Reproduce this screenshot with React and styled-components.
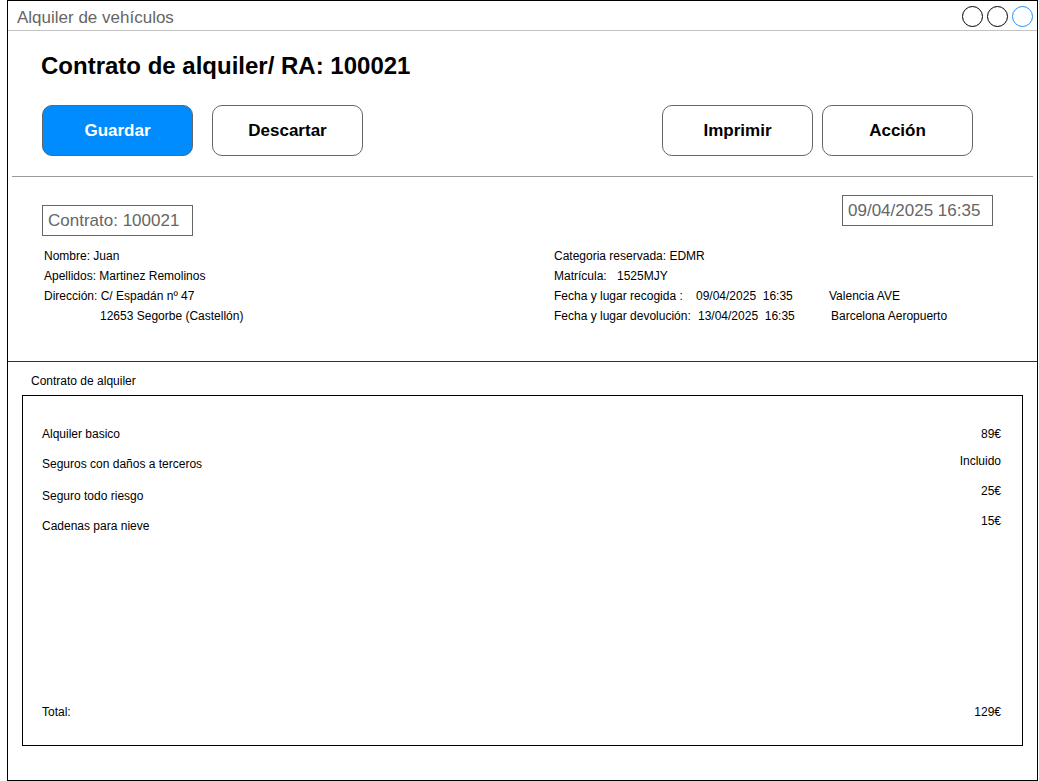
import React from 'react';
import styled, { createGlobalStyle } from 'styled-components';

const GlobalStyle = createGlobalStyle`
  html, body {
    margin: 0;
    padding: 0;
    background: #ffffff;
  }
  body {
    font-family: "Liberation Sans", Arial, sans-serif;
    color: #000;
  }
`;

const Window = styled.div`
  box-sizing: border-box;
  margin-left: 7px;
  width: 1031px;
  height: 781px;
  border: 1px solid #000;
  display: flex;
  flex-direction: column;
`;

const TitleBar = styled.div`
  box-sizing: border-box;
  height: 30px;
  border-bottom: 1px solid #c4c4c4;
  display: flex;
  align-items: center;
  justify-content: space-between;
  padding: 0 4px 0 9px;
`;

const TitleText = styled.span`
  font-size: 17px;
  color: #666;
  margin-top: 4px;
`;

const Controls = styled.div`
  display: flex;
  gap: 4px;
  margin-top: 2px;
`;

const Dot = styled.span`
  box-sizing: border-box;
  width: 21px;
  height: 21px;
  border-radius: 50%;
  border: 1.5px solid ${(props) => (props.$blue ? '#1e90ff' : '#000')};
`;

const Header = styled.div`
  padding: 19px 4px 0;
`;

const Heading = styled.h1`
  margin: 0 0 23px 29px;
  font-size: 24px;
  line-height: 32px;
  font-weight: bold;
`;

const Toolbar = styled.div`
  display: flex;
  padding: 0 60px 0 30px;
  padding-bottom: 20px;
  border-bottom: 1px solid #9a9a9a;
`;

const Group = styled.div`
  display: flex;
  gap: ${(props) => props.$gap}px;
  margin-left: ${(props) => (props.$right ? 'auto' : '0')};
`;

const Button = styled.button`
  box-sizing: border-box;
  width: 151px;
  height: 51px;
  border: 1px solid #666;
  border-radius: 10px;
  background: ${(props) => (props.$primary ? '#008cff' : '#fff')};
  color: ${(props) => (props.$primary ? '#fff' : '#000')};
  font-family: "Liberation Sans", Arial, sans-serif;
  font-size: 17px;
  font-weight: bold;
  padding: 0;
`;

const InfoSection = styled.div`
  box-sizing: border-box;
  height: 185px;
  padding: 18px 0 0;
  border-bottom: 1px solid #333;
`;

const BoxRow = styled.div`
  display: flex;
  align-items: flex-start;
  justify-content: space-between;
  padding: 0 44px 0 34px;
`;

const FieldBox = styled.div`
  box-sizing: border-box;
  width: 151px;
  height: 31px;
  border: 1px solid #666;
  color: #666;
  font-size: 17px;
  line-height: 29px;
  padding-left: 5px;
  margin-top: ${(props) => props.$offset || 0}px;
`;

const Details = styled.div`
  display: grid;
  grid-template-columns: 510px 1fr;
  padding-left: 36px;
  margin-top: 10px;
`;

const Column = styled.div`
  display: flex;
  flex-direction: column;
`;

const Line = styled.div`
  display: flex;
  font-size: 12px;
  line-height: 20px;
  padding-left: ${(props) => props.$indent || 0}px;
  white-space: nowrap;
`;

const Cell = styled.span`
  display: inline-block;
  width: ${(props) => props.$w}px;
`;

const ContractSection = styled.div`
  flex: 1;
  padding: 9px 14px 34px 14px;
  display: flex;
  flex-direction: column;
`;

const SectionLabel = styled.div`
  font-size: 12px;
  line-height: 20px;
  padding-left: 9px;
  margin-bottom: 4px;
`;

const ItemsBox = styled.div`
  box-sizing: border-box;
  flex: 1;
  border: 1px solid #000;
  padding: 28px 21px 23px 19px;
  display: flex;
  flex-direction: column;
`;

const ItemRow = styled.div`
  display: flex;
  justify-content: space-between;
  align-items: flex-start;
  font-size: 12px;
  line-height: 20px;
  margin-top: ${(props) => props.$gap || 0}px;
`;

const ItemLabel = styled.span`
  padding-top: ${(props) => props.$drop || 0}px;
`;

const TotalRow = styled(ItemRow)`
  margin-top: auto;
`;

const items = [
  { label: 'Alquiler basico', value: '89€', gap: 0, drop: 0 },
  { label: 'Seguros con daños a terceros', value: 'Incluido', gap: 7, drop: 3 },
  { label: 'Seguro todo riesgo', value: '25€', gap: 7, drop: 5 },
  { label: 'Cadenas para nieve', value: '15€', gap: 5, drop: 5 },
];

export default function App() {
  return (
    <>
      <GlobalStyle />
      <Window>
        <TitleBar>
          <TitleText>Alquiler de vehículos</TitleText>
          <Controls>
            <Dot />
            <Dot />
            <Dot $blue />
          </Controls>
        </TitleBar>

        <Header>
          <Heading>Contrato de alquiler/ RA: 100021</Heading>
          <Toolbar>
            <Group $gap={19}>
              <Button $primary>Guardar</Button>
              <Button>Descartar</Button>
            </Group>
            <Group $gap={9} $right>
              <Button>Imprimir</Button>
              <Button>Acción</Button>
            </Group>
          </Toolbar>
        </Header>

        <InfoSection>
          <BoxRow>
            <FieldBox $offset={10}>Contrato: 100021</FieldBox>
            <FieldBox>09/04/2025 16:35</FieldBox>
          </BoxRow>
          <Details>
            <Column>
              <Line>Nombre: Juan</Line>
              <Line>Apellidos: Martinez Remolinos</Line>
              <Line>Dirección: C/ Espadán nº 47</Line>
              <Line $indent={56}>12653 Segorbe (Castellón)</Line>
            </Column>
            <Column>
              <Line>Categoria reservada: EDMR</Line>
              <Line>
                <Cell $w={63}>Matrícula:</Cell>
                <span>1525MJY</span>
              </Line>
              <Line>
                <Cell $w={142}>Fecha y lugar recogida :</Cell>
                <Cell $w={133}>09/04/2025&nbsp;&nbsp;16:35</Cell>
                <span>Valencia AVE</span>
              </Line>
              <Line>
                <Cell $w={144}>Fecha y lugar devolución:</Cell>
                <Cell $w={133}>13/04/2025&nbsp;&nbsp;16:35</Cell>
                <span>Barcelona Aeropuerto</span>
              </Line>
            </Column>
          </Details>
        </InfoSection>

        <ContractSection>
          <SectionLabel>Contrato de alquiler</SectionLabel>
          <ItemsBox>
            {items.map((item) => (
              <ItemRow key={item.label} $gap={item.gap}>
                <ItemLabel $drop={item.drop}>{item.label}</ItemLabel>
                <span>{item.value}</span>
              </ItemRow>
            ))}
            <TotalRow>
              <span>Total:</span>
              <span>129€</span>
            </TotalRow>
          </ItemsBox>
        </ContractSection>
      </Window>
    </>
  );
}
